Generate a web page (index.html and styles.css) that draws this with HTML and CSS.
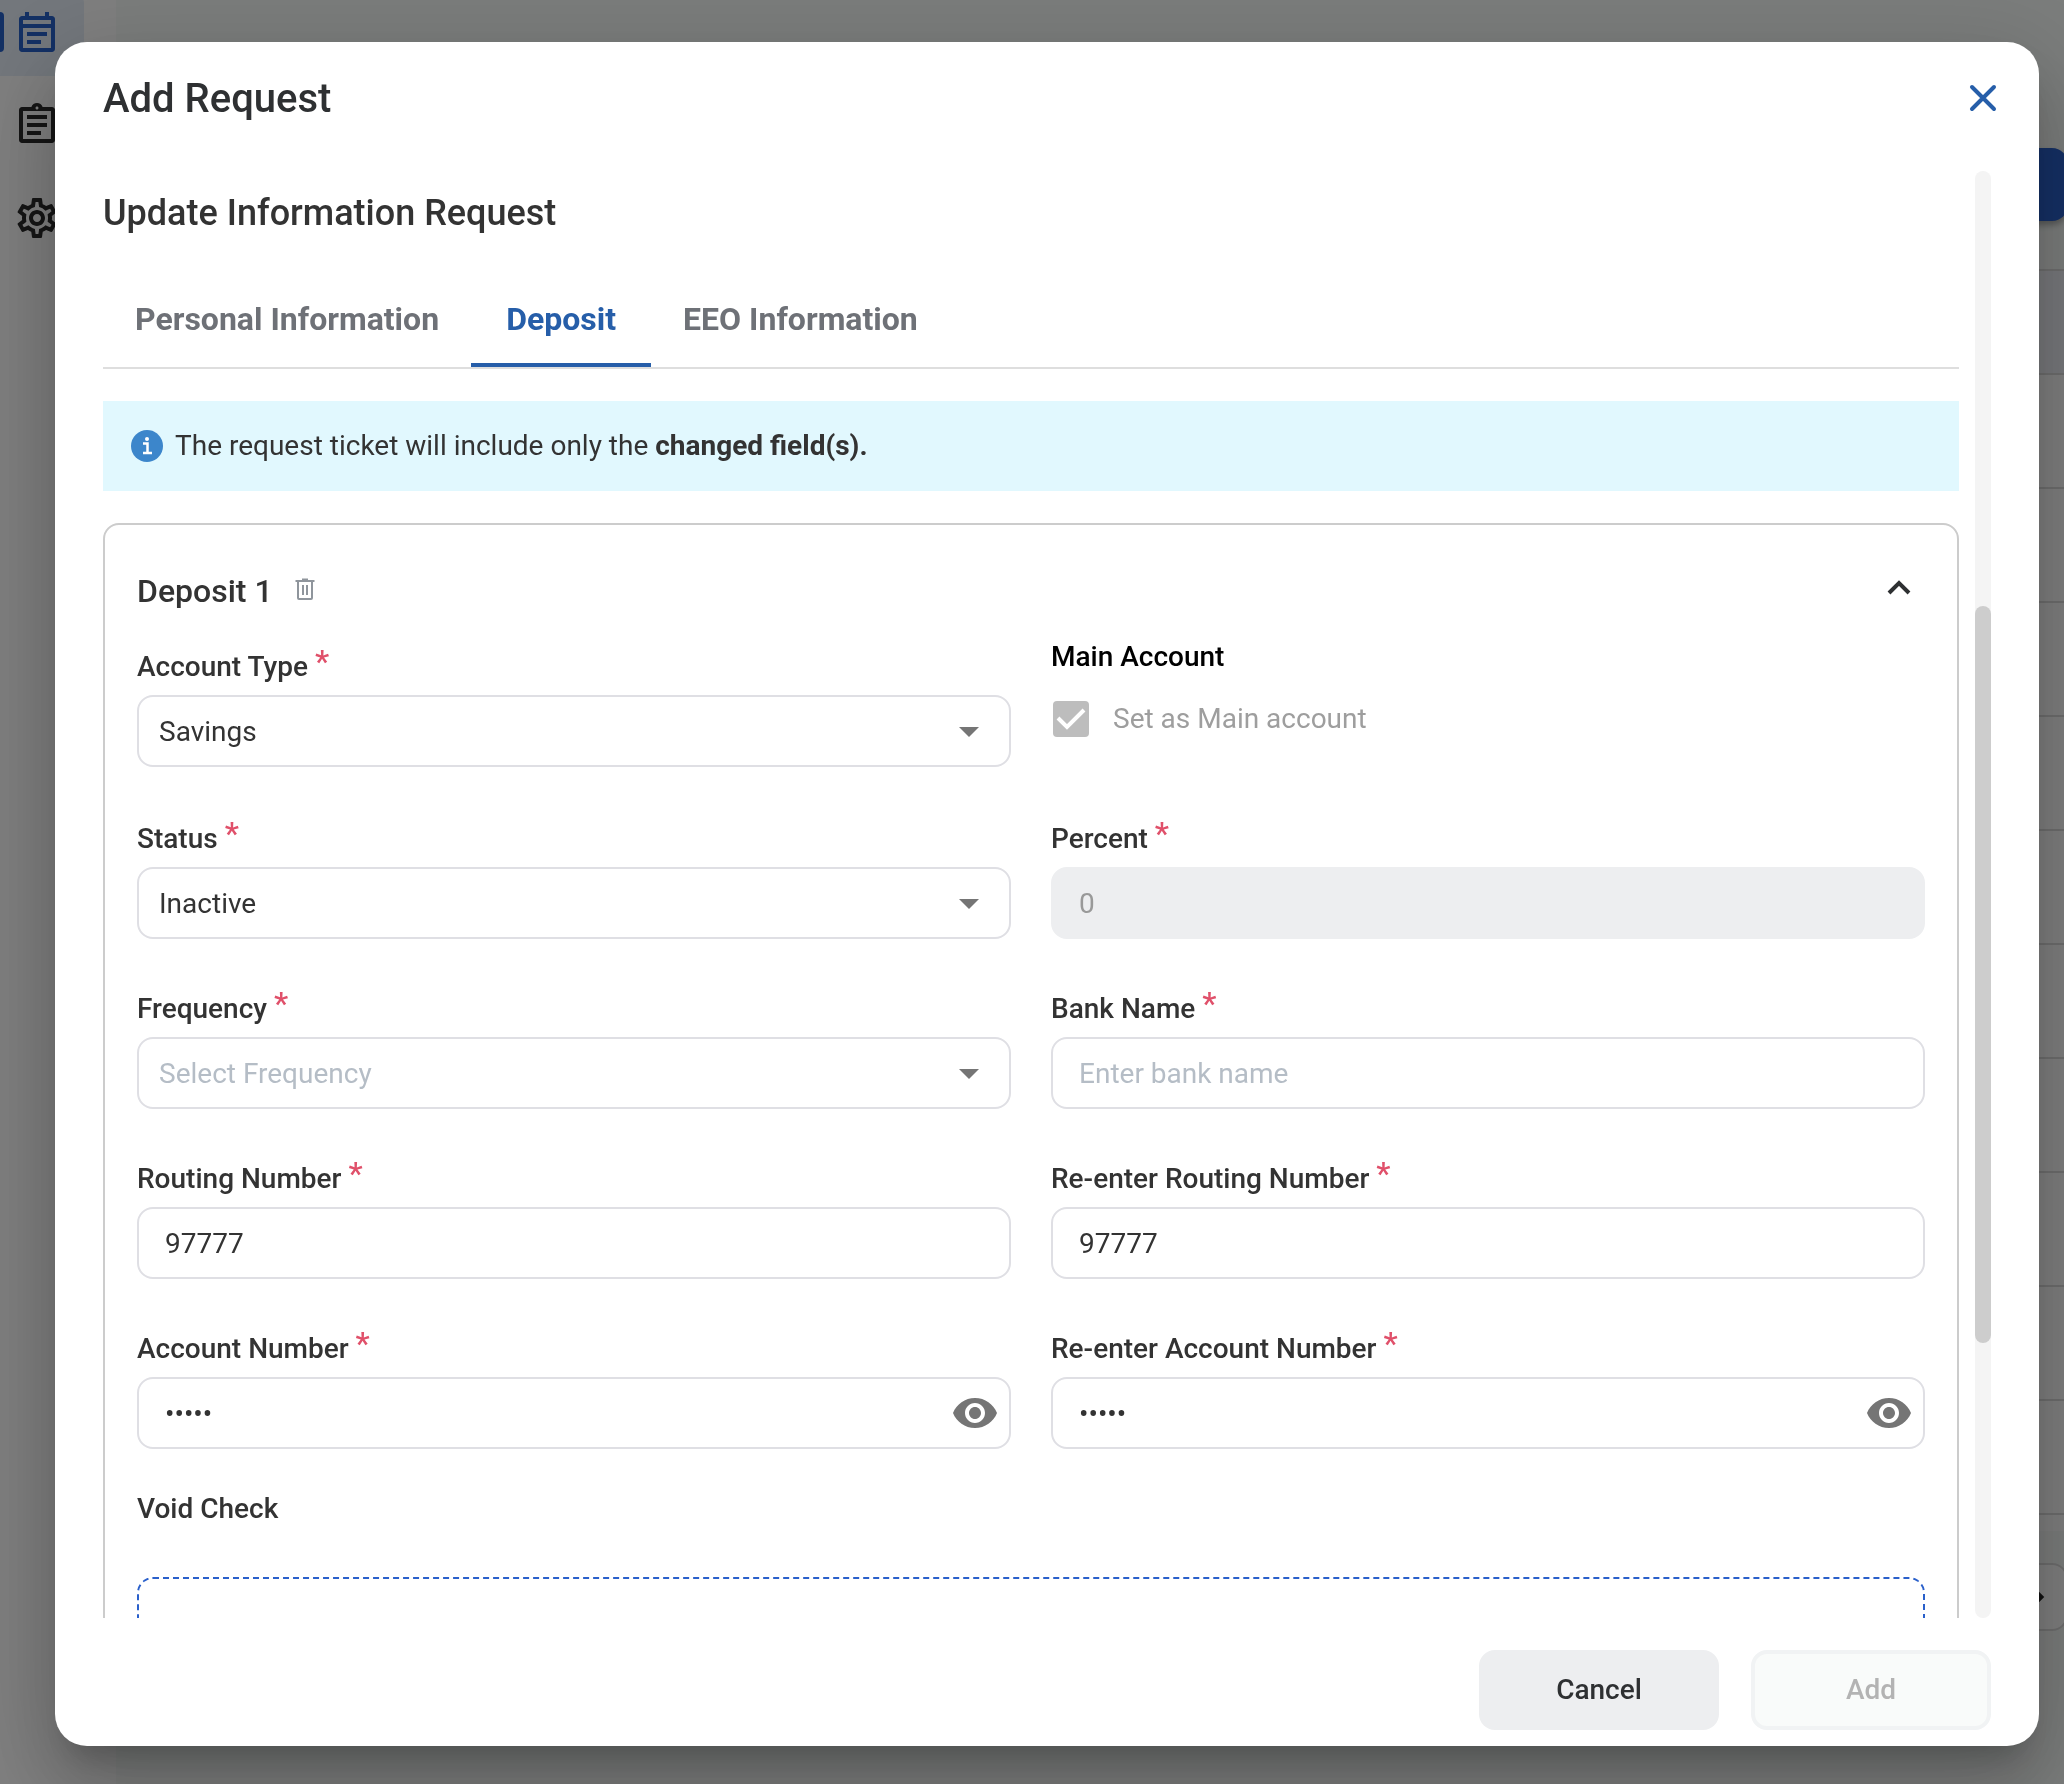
FILE: index.html
```html
<!DOCTYPE html>
<html lang="en">
<head>
    <meta charset="UTF-8">
    <meta name="viewport" content="width=device-width, initial-scale=1.0">
    <title>Add Request</title>
    <link rel="stylesheet" href="styles.css">
</head>
<body>
    <div class="page">
        <nav class="sidebar">
            <a href="#" class="nav-item active" aria-label="Requests">
                <svg viewBox="0 0 24 24"><path d="M19.5 4H18V2h-2v2H8V2H6v2H4.500C3.700 4 3 4.700 3 5.500v15c0 .8.700 1.500 1.500 1.500h15c.8 0 1.500-.7 1.500-1.500v-15c0-.8-.7-1.500-1.500-1.500zM19 20H5V10h14v10zm0-12H5V6h14v2zM7 12h10v2H7zm0 4h7v2H7z"/></svg>
            </a>
            <a href="#" class="nav-item" aria-label="Tasks">
                <svg viewBox="0 0 24 24"><path d="M7 15h7v2H7zm0-4h10v2H7zm0-4h10v2H7zm12.500-4h-4.700C14.400 1.800 13.300 1 12 1s-2.400.8-2.800 2H4.500C3.700 3 3 3.700 3 4.500v15c0 .8.700 1.500 1.500 1.500h15c.8 0 1.500-.7 1.500-1.500v-15c0-.8-.7-1.500-1.500-1.500zM12 2.750c.4 0 .75.340.75.750s-.34.750-.75.750-.75-.34-.75-.75.340-.75.750-.75zM19 19H5V5h14v14z"/></svg>
            </a>
            <a href="#" class="nav-item" aria-label="Settings">
                <svg viewBox="0 0 24 24"><path d="M19.430 12.980c.04-.32.070-.64.070-.98s-.03-.66-.07-.98l2.110-1.650c.19-.15.240-.42.120-.64l-2-3.460c-.09-.16-.26-.25-.44-.25-.06 0-.12.010-.17.030l-2.490 1c-.52-.4-1.080-.73-1.690-.98l-.38-2.650C14.460 2.180 14.250 2 14 2h-4c-.25 0-.46.180-.49.420l-.38 2.650c-.61.250-1.170.590-1.690.980l-2.490-1c-.06-.02-.12-.03-.18-.03-.17 0-.34.090-.43.250l-2 3.460c-.13.220-.07.490.120.640l2.110 1.650c-.04.320-.07.650-.07.980s.030.660.070.980l-2.110 1.650c-.19.150-.24.420-.12.640l2 3.460c.09.160.260.250.440.250.060 0 .12-.01.170-.03l2.490-1c.52.400 1.080.730 1.690.980l.38 2.650c.03.240.240.420.490.420h4c.25 0 .46-.18.490-.42l.38-2.650c.61-.25 1.170-.59 1.690-.98l2.490 1c.06.020.120.030.180.030.170 0 .34-.09.430-.25l2-3.460c.12-.22.070-.49-.12-.64l-2.110-1.650zm-1.980-1.710c.04.310.050.520.050.730s-.02.430-.05.730l-.14 1.130.89.700 1.080.840-.7 1.210-1.270-.51-1.040-.42-.9.680c-.43.320-.84.560-1.250.730l-1.060.43-.16 1.130-.2 1.350h-1.400l-.19-1.350-.16-1.130-1.060-.43c-.43-.18-.83-.41-1.230-.71l-.91-.7-1.060.43-1.270.51-.7-1.210 1.080-.84.890-.7-.14-1.130c-.03-.31-.05-.54-.05-.74s.02-.43.050-.73l.14-1.130-.89-.7-1.080-.84.700-1.210 1.270.51 1.040.42.900-.68c.43-.32.840-.56 1.250-.73l1.060-.43.160-1.130.2-1.350h1.390l.19 1.350.160 1.130 1.060.430c.43.180.830.410 1.230.710l.91.700 1.060-.43 1.270-.51.700 1.210-1.070.85-.89.700.140 1.130zM12 8c-2.210 0-4 1.790-4 4s1.790 4 4 4 4-1.790 4-4-1.790-4-4-4zm0 6c-1.100 0-2-.9-2-2s.9-2 2-2 2 .9 2 2-.9 2-2 2z"/></svg>
            </a>
        </nav>
        <main class="main">
            <button class="new-button" aria-label="New"></button>
            <div class="list">
                <div class="list-head"></div>
                <div class="list-row"></div>
                <div class="list-row"></div>
                <div class="list-row"></div>
                <div class="list-row"></div>
                <div class="list-row"></div>
                <div class="list-row"></div>
                <div class="list-row"></div>
                <div class="list-row"></div>
                <div class="list-row"></div>
                <div class="list-row"></div>
                <div class="list-end"></div>
            </div>
            <button class="next-button" aria-label="Next page">
                <svg viewBox="0 0 24 24"><path d="M9 6l6 6-6 6" fill="none" stroke="currentColor" stroke-width="3"/></svg>
            </button>
        </main>
    </div>

    <div class="overlay">
        <div class="modal" role="dialog" aria-labelledby="modalTitle">
            <header class="modal-header">
                <h1 id="modalTitle">Add Request</h1>
                <button class="close-button" aria-label="Close">
                    <svg viewBox="0 0 48 48"><path d="M13 13l22 22M35 13L13 35"/></svg>
                </button>
            </header>

            <div class="modal-body">
                <div class="content">
                    <h2>Update Information Request</h2>

                    <div class="tabs" role="tablist">
                        <button class="tab" role="tab">Personal Information</button>
                        <button class="tab selected" role="tab" aria-selected="true">Deposit</button>
                        <button class="tab" role="tab">EEO Information</button>
                    </div>

                    <div class="banner">
                        <svg viewBox="0 0 32 32"><circle cx="16" cy="16" r="16" fill="#3c86cb"/><circle cx="16" cy="9" r="2" fill="#fff"/><path d="M12 13.500h4.500v9M12 23h9" fill="none" stroke="#fff" stroke-width="2.500"/></svg>
                        <p>The request ticket will include only the <b>changed field(s).</b></p>
                    </div>

                    <section class="card">
                        <div class="card-header">
                            <h3>Deposit 1</h3>
                            <button class="delete-button" aria-label="Delete deposit">
                                <svg viewBox="0 0 24 24"><path d="M2.500 4h19M9 2.500h6M5 4v17q0 1 1 1h12q1 0 1-1V4M10 8v10M14 8v10"/></svg>
                            </button>
                            <button class="toggle-button" aria-label="Collapse">
                                <svg viewBox="0 0 28 28"><path d="M4 20l10-10 10 10"/></svg>
                            </button>
                        </div>

                        <form class="form">
                            <div class="field field-first">
                                <label for="accountType">Account Type <span class="required">*</span></label>
                                <div class="select-box">
                                    <select id="accountType"><option>Savings</option></select>
                                </div>
                            </div>
                            <div class="main-account">
                                <p>Main Account</p>
                                <label class="check"><input type="checkbox" checked disabled>Set as Main account</label>
                            </div>

                            <div class="field">
                                <label for="status">Status <span class="required">*</span></label>
                                <div class="select-box">
                                    <select id="status"><option>Inactive</option></select>
                                </div>
                            </div>
                            <div class="field">
                                <label for="percent">Percent <span class="required">*</span></label>
                                <input type="text" id="percent" value="0" disabled>
                            </div>

                            <div class="field">
                                <label for="frequency">Frequency <span class="required">*</span></label>
                                <div class="select-box">
                                    <select id="frequency" class="empty"><option>Select Frequency</option></select>
                                </div>
                            </div>
                            <div class="field">
                                <label for="bankName">Bank Name <span class="required">*</span></label>
                                <input type="text" id="bankName" placeholder="Enter bank name">
                            </div>

                            <div class="field">
                                <label for="routing">Routing Number <span class="required">*</span></label>
                                <input type="text" id="routing" value="97777">
                            </div>
                            <div class="field">
                                <label for="routing2">Re-enter Routing Number <span class="required">*</span></label>
                                <input type="text" id="routing2" value="97777">
                            </div>

                            <div class="field">
                                <label for="account">Account Number <span class="required">*</span></label>
                                <div class="password-box">
                                    <input type="password" id="account" value="97777">
                                    <button type="button" class="eye-button" aria-label="Show account number">
                                        <svg viewBox="0 0 24 24"><path d="M12 4.500C7 4.500 2.730 7.610 1 12c1.730 4.390 6 7.500 11 7.500s9.270-3.110 11-7.500c-1.730-4.390-6-7.500-11-7.500zM12 17c-2.760 0-5-2.240-5-5s2.240-5 5-5 5 2.240 5 5-2.240 5-5 5zm0-8c-1.660 0-3 1.340-3 3s1.340 3 3 3 3-1.340 3-3-1.340-3-3-3z"/></svg>
                                    </button>
                                </div>
                            </div>
                            <div class="field">
                                <label for="account2">Re-enter Account Number <span class="required">*</span></label>
                                <div class="password-box">
                                    <input type="password" id="account2" value="97777">
                                    <button type="button" class="eye-button" aria-label="Show account number">
                                        <svg viewBox="0 0 24 24"><path d="M12 4.500C7 4.500 2.730 7.610 1 12c1.730 4.390 6 7.500 11 7.500s9.270-3.110 11-7.500c-1.730-4.390-6-7.500-11-7.500zM12 17c-2.760 0-5-2.240-5-5s2.240-5 5-5 5 2.240 5 5-2.240 5-5 5zm0-8c-1.660 0-3 1.340-3 3s1.340 3 3 3 3-1.340 3-3-1.340-3-3-3z"/></svg>
                                    </button>
                                </div>
                            </div>
                        </form>

                        <p class="void-label">Void Check</p>
                        <div class="dropzone"></div>
                    </section>
                </div>
                <div class="scrollbar"><div class="thumb"></div></div>
            </div>

            <footer class="modal-footer">
                <button class="button cancel">Cancel</button>
                <button class="button add" disabled>Add</button>
            </footer>
        </div>
    </div>
</body>
</html>
```
FILE: styles.css
```css
* {
    box-sizing: border-box;
}
body {
    margin: 0;
    height: 100vh;
    overflow: hidden;
    font-family: Roboto, Arial, sans-serif;
    font-size: 28px;
    line-height: 32px;
    color: #333;
}
h1, h2, h3, p {
    margin: 0;
    font-weight: 500;
}
button, input, select {
    font: inherit;
    color: inherit;
    margin: 0;
}
button {
    padding: 0;
    border: none;
    background: none;
    cursor: pointer;
}
svg {
    display: block;
}

/* page behind the dialog */
.page {
    display: flex;
    height: 100vh;
    overflow: hidden;
    background-color: #f7fbf9;
}
.sidebar {
    display: flex;
    flex-direction: column;
    gap: 5px;
    width: 116px;
    margin-top: -12px;
    background-color: #fff;
}
.nav-item {
    display: flex;
    align-items: center;
    height: 88px;
    margin-right: 32px;
    padding-left: 13px;
    border-radius: 0 16px 16px 0;
    color: #2b2b2b;
}
.nav-item svg {
    width: 48px;
    height: 48px;
    fill: currentColor;
}
.nav-item.active {
    background-color: #e6eff9;
    color: #2761c9;
}
.nav-item.active::before {
    content: "";
    width: 4px;
    height: 40px;
    margin: 0 9px 0 -13px;
    border-radius: 0 4px 4px 0;
    background-color: #2761c9;
}
.main {
    flex: 1;
    display: flex;
    flex-direction: column;
    align-items: flex-end;
    margin-right: -4px;
    padding-top: 148px;
}
.new-button {
    width: 240px;
    height: 73px;
    border-radius: 16px;
    background-color: #2a60cb;
    box-shadow: 0 4px 6px rgba(0, 0, 0, 0.3);
}
.list {
    width: 100%;
    margin-top: 48px;
    border-top: 2px solid #dcdcdc;
    background-color: #fff;
}
.list-head {
    height: 104px;
    border-bottom: 2px solid #dcdcdc;
    background-color: #f0f2f8;
}
.list-row {
    height: 114px;
    border-bottom: 2px solid #dcdcdc;
}
.list-end {
    height: 16px;
}
.next-button {
    display: flex;
    align-items: center;
    width: 68px;
    height: 68px;
    margin-top: 32px;
    padding-left: 8px;
    border: 2px solid #dcdcdc;
    border-radius: 16px;
    background-color: #fff;
}
.next-button svg {
    width: 48px;
    height: 48px;
    color: #222;
}

/* dialog */
.overlay {
    position: fixed;
    inset: 0;
    display: flex;
    padding: 42px 25px 38px 55px;
    background-color: rgba(0, 0, 0, 0.5);
}
.modal {
    flex: 1;
    display: flex;
    flex-direction: column;
    min-width: 0;
    border-radius: 32px;
    background-color: #fff;
    box-shadow: 0 22px 30px -14px rgba(0, 0, 0, 0.2), 0 48px 76px 6px rgba(0, 0, 0, 0.14), 0 18px 92px 16px rgba(0, 0, 0, 0.12);
}
.modal-header {
    display: flex;
    align-items: flex-start;
    justify-content: space-between;
    padding: 32px 32px 47px 48px;
}
h1 {
    font-size: 40px;
    line-height: 50px;
    color: #2e3032;
}
.close-button svg {
    width: 48px;
    height: 48px;
    fill: none;
    stroke: #265ea9;
    stroke-width: 4;
    stroke-linecap: round;
}
.modal-body {
    flex: 1;
    display: flex;
    gap: 16px;
    min-height: 0;
    padding: 0 48px;
}
.content {
    flex: 1;
    min-width: 0;
    overflow: hidden;
    padding-top: 20px;
}
.scrollbar {
    display: grid;
    grid-template-rows: 435fr 737fr 275fr;
    width: 16px;
    border-radius: 8px;
    background-color: #f4f4f4;
}
.thumb {
    grid-row: 2;
    border-radius: 8px;
    background-color: #cdcdcd;
}
h2 {
    font-size: 36px;
    line-height: 44px;
    margin-bottom: 40px;
}
.tabs {
    display: flex;
    border-bottom: 2px solid #dedede;
}
.tab {
    min-width: 180px;
    padding: 24px 32px;
    border-bottom: 4px solid transparent;
    font-size: 32px;
    line-height: 40px;
    font-weight: 700;
    color: #6e7177;
}
.tab.selected {
    border-color: #265ea9;
    color: #265ea9;
}
.banner {
    display: flex;
    align-items: center;
    gap: 12px;
    height: 90px;
    margin: 32px 0;
    padding: 0 28px;
    background-color: #e1f8fe;
}
.banner svg {
    width: 32px;
    height: 32px;
}
.banner p {
    font-weight: 400;
}
.banner b {
    font-weight: 700;
}
.card {
    padding: 32px;
    border: 2px solid #ccc;
    border-radius: 16px;
}
.card-header {
    display: flex;
    align-items: center;
    height: 68px;
    margin-bottom: 16px;
}
h3 {
    font-size: 32px;
    line-height: 40px;
}
.delete-button {
    margin: 0 0 4px 20px;
}
.delete-button svg {
    width: 24px;
    height: 24px;
    fill: none;
    stroke: #8f959c;
    stroke-width: 2;
}
.toggle-button {
    margin: 0 12px 8px auto;
}
.toggle-button svg {
    width: 28px;
    height: 28px;
    fill: none;
    stroke: #2e3032;
    stroke-width: 4;
}

/* form */
.form {
    display: grid;
    grid-template-columns: 1fr 1fr;
    gap: 54px 40px;
}
.field > label {
    display: block;
    height: 32px;
    margin-bottom: 12px;
    font-weight: 500;
}
.field-first {
    padding: 10px 0 2px;
}
.required {
    font-size: 32px;
    line-height: 0;
    vertical-align: 4px;
    color: #e0506a;
}
.field input, select {
    display: block;
    width: 100%;
    height: 72px;
    padding: 0 26px;
    border: 2px solid #dfdfe4;
    border-radius: 16px;
    background-color: #fff;
    appearance: none;
}
.field select {
    padding: 2px 20px 0;
}
.field input:disabled {
    border-color: #edeef0;
    background-color: #edeef0;
    color: #999;
}
.field input::placeholder, .field select.empty {
    color: #b5bdc6;
}
.select-box, .password-box {
    position: relative;
}
.select-box::after {
    content: "";
    position: absolute;
    top: 32px;
    right: 32px;
    border: 10px solid transparent;
    border-top-color: #757575;
    border-bottom: none;
    pointer-events: none;
}
.eye-button {
    position: absolute;
    top: 12px;
    right: 12px;
}
.eye-button svg {
    width: 48px;
    height: 48px;
    fill: #757575;
}
.main-account p {
    margin-bottom: 28px;
    color: #000;
}
.check {
    display: flex;
    align-items: center;
    gap: 24px;
    padding-left: 2px;
    color: #9e9e9e;
}
.check input {
    width: 36px;
    height: 36px;
    border-radius: 4px;
    appearance: none;
    background: #bdbdbd url("data:image/svg+xml,%3Csvg xmlns='http://www.w3.org/2000/svg' viewBox='0 0 36 36'%3E%3Cpath d='M5 17l9 9L31 9' fill='none' stroke='%23fff' stroke-width='4'/%3E%3C/svg%3E");
}
.void-label {
    margin: 44px 0 52px;
}
.dropzone {
    height: 240px;
    border: 2px dashed #2a60cb;
    border-radius: 16px;
}
.modal-footer {
    display: flex;
    justify-content: flex-end;
    gap: 32px;
    padding: 32px 48px 16px;
}
.button {
    width: 240px;
    height: 80px;
    border-radius: 16px;
    font-weight: 500;
}
.cancel {
    background-color: #edeef0;
    color: #2e3032;
}
.add {
    border: 4px solid #f1f3f4;
    background-color: #f9fbfa;
    color: #b3b3b3;
}
```
